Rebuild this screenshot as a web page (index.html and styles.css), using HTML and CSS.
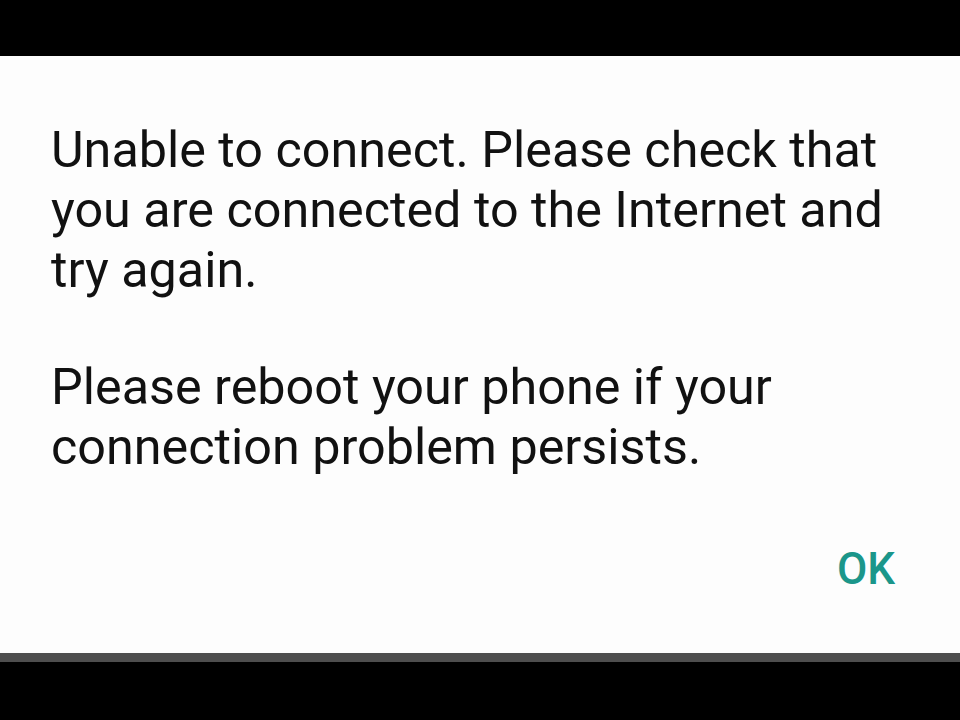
FILE: index.html
```html
<!DOCTYPE html>
<html lang="en">
  <head>
    <meta charset="UTF-8" />
    <meta name="viewport" content="width=device-width, initial-scale=1.0" />
    <title>Connection error</title>
    <link rel="stylesheet" href="styles.css">
  </head>
  <body>
    <div class="top-bar"></div>

    <div class="dialog">
      <p class="message">Unable to connect. Please check that you are connected to the Internet and try again.</p>
      <p class="message">Please reboot your phone if your connection problem persists.</p>
      <div class="actions">
        <button class="ok-btn">OK</button>
      </div>
    </div>
  </body>
</html>
```

FILE: styles.css
```css
* {
  box-sizing: border-box;
  margin: 0;
  padding: 0;
}

html,
body {
  height: 100%;
}

body {
  font-family: Roboto, "Noto Sans", sans-serif;
  background-color: #000;
  color: #111;
  overflow: hidden;
}

.top-bar {
  height: 56px;
  background-color: #000;
}

.dialog {
  height: 606px;
  background-color: #fdfdfd;
  border-bottom: 9px solid #4e4e4e;
  padding: 64px 60px 0 51px;
}

.message {
  font-size: 50.3px;
  line-height: 60px;
  max-width: 845px;
}

.message + .message {
  margin-top: 57px;
}

.actions {
  display: flex;
  justify-content: flex-end;
  margin-top: 66px;
}

.ok-btn {
  font-family: Roboto, "Noto Sans", sans-serif;
  font-size: 44px;
  font-weight: 500;
  line-height: 52px;
  color: #1b968a;
  background: none;
  border: none;
  padding: 0 5px 0 0;
  cursor: pointer;
}
```
